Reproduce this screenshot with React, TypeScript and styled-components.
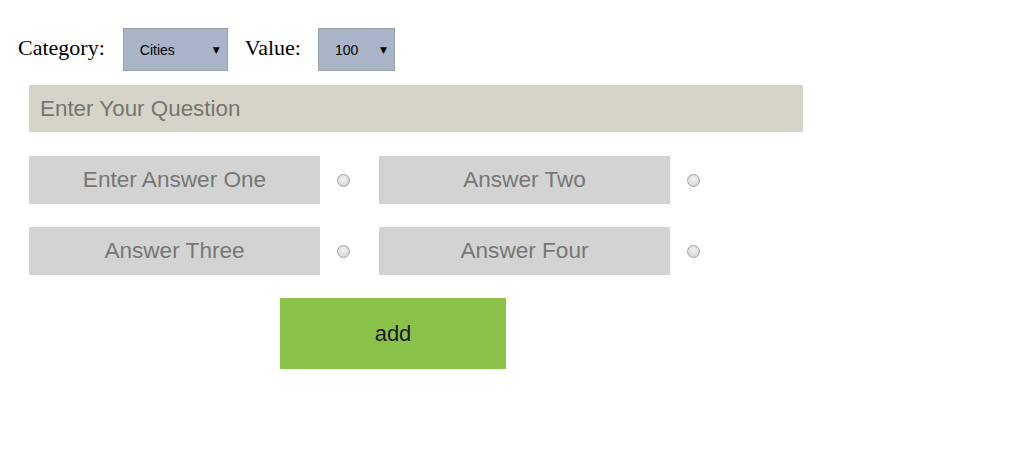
import React from "react";
import styled, { createGlobalStyle } from "styled-components";

const Global = createGlobalStyle`
  html, body { margin: 0; padding: 0; background: #fff; }
  body { font-family: "Liberation Serif", "Times New Roman", serif; }
`;

const Page = styled.div`
  padding: 28px 0 0 18px;
`;

const TopBar = styled.div`
  display: flex;
  align-items: center;
  height: 43px;
`;

const Label = styled.span<{ $gap: number }>`
  font-family: "Liberation Serif", "Times New Roman", serif;
  font-size: 22px;
  color: #000;
  margin-right: ${(p) => p.$gap}px;
  position: relative;
  top: -2px;
`;

const SelectWrap = styled.div<{ $w: number; $after: number }>`
  position: relative;
  width: ${(p) => p.$w}px;
  height: 43px;
  margin-right: ${(p) => p.$after}px;
`;

const Select = styled.select`
  appearance: none;
  -webkit-appearance: none;
  width: 100%;
  height: 100%;
  box-sizing: border-box;
  border: 1px solid #9aa2ae;
  border-radius: 0;
  background: #a9b4c9;
  font-family: "Liberation Sans", Arial, sans-serif;
  font-size: 14px;
  color: #000;
  padding: 0 0 0 16px;
  outline: none;
`;

const Arrow = styled.span`
  position: absolute;
  right: 8px;
  top: 50%;
  transform: translateY(-50%);
  font-family: "DejaVu Sans", sans-serif;
  font-size: 9px;
  color: #000;
  pointer-events: none;
`;

const Form = styled.div`
  padding-left: 11px;
  display: flex;
  flex-direction: column;
`;

const QuestionInput = styled.input`
  margin-top: 14px;
  width: 774px;
  height: 47px;
  box-sizing: border-box;
  border: none;
  background: #d6d4c8;
  padding: 0 11px;
  font-family: "Liberation Sans", Arial, sans-serif;
  font-size: 22.4px;
  color: #333;
  outline: none;
  &::placeholder { color: #76756f; }
`;

const AnswerGrid = styled.div`
  margin-top: 24px;
  display: grid;
  grid-template-columns: repeat(2, auto);
  justify-content: start;
  row-gap: 23px;
  column-gap: 29px;
`;

const AnswerCell = styled.div`
  display: flex;
  align-items: center;
  gap: 17px;
`;

const AnswerInput = styled.input`
  width: 291px;
  height: 48px;
  box-sizing: border-box;
  border: none;
  background: #d3d3d3;
  text-align: center;
  font-family: "Liberation Sans", Arial, sans-serif;
  font-size: 22.6px;
  color: #333;
  outline: none;
  &::placeholder { color: #777; }
`;

const Radio = styled.input.attrs({ type: "radio" })`
  appearance: none;
  -webkit-appearance: none;
  margin: 0;
  width: 13px;
  height: 13px;
  border-radius: 50%;
  border: 1px solid #a3a3a3;
  box-sizing: border-box;
  background: radial-gradient(circle at 50% 40%, #f4f4f4 0%, #dcdcdc 60%, #cfcfcf 100%);
`;

const AddButton = styled.button`
  margin-top: 23px;
  margin-left: 251px;
  width: 226px;
  height: 71px;
  border: none;
  border-radius: 0;
  background: #8bc34a;
  font-family: "Liberation Sans", Arial, sans-serif;
  font-size: 22px;
  color: #1a1a1a;
  cursor: pointer;
  padding: 0;
`;

const answers = ["Enter Answer One", "Answer Two", "Answer Three", "Answer Four"];

export default function App() {
  return (
    <>
      <Global />
      <Page>
        <TopBar>
          <Label $gap={18}>Category:</Label>
          <SelectWrap $w={105} $after={17}>
            <Select defaultValue="Cities">
              <option>Cities</option>
              <option>Countries</option>
            </Select>
            <Arrow>▼</Arrow>
          </SelectWrap>
          <Label $gap={17}>Value:</Label>
          <SelectWrap $w={77} $after={0}>
            <Select defaultValue="100">
              <option>100</option>
              <option>200</option>
              <option>300</option>
            </Select>
            <Arrow>▼</Arrow>
          </SelectWrap>
        </TopBar>
        <Form>
          <QuestionInput placeholder="Enter Your Question" />
          <AnswerGrid>
            {answers.map((a) => (
              <AnswerCell key={a}>
                <AnswerInput placeholder={a} />
                <Radio name="correct" />
              </AnswerCell>
            ))}
          </AnswerGrid>
          <div>
            <AddButton>add</AddButton>
          </div>
        </Form>
      </Page>
    </>
  );
}
